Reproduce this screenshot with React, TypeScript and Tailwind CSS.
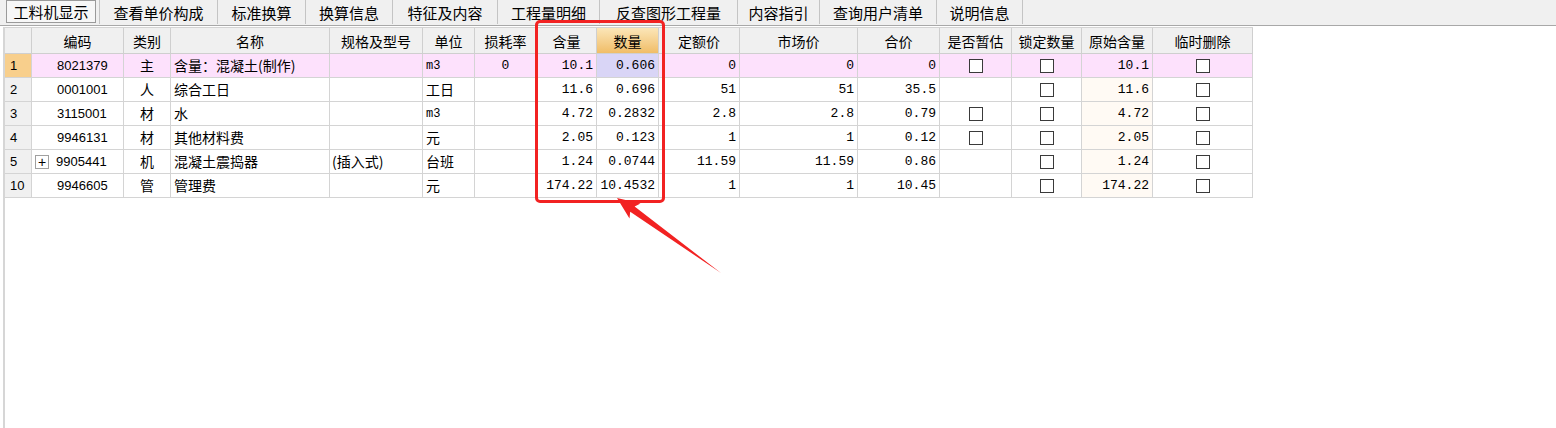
import React from "react";

const tabs: [string, number][] = [
  ["工料机显示", 96],
  ["查看单价构成", 118],
  ["标准换算", 88],
  ["换算信息", 87],
  ["特征及内容", 105],
  ["工程量明细", 102],
  ["反查图形工程量", 138],
  ["内容指引", 82],
  ["查询用户清单", 117],
  ["说明信息", 86],
];

const headers = [
  "",
  "编码",
  "类别",
  "名称",
  "规格及型号",
  "单位",
  "损耗率",
  "含量",
  "数量",
  "定额价",
  "市场价",
  "合价",
  "是否暂估",
  "锁定数量",
  "原始含量",
  "临时删除",
];

type Row = {
  no: string;
  code: string;
  kind: string;
  name: string;
  spec: string;
  unit: string;
  unitMono: boolean;
  loss: string;
  hl: string;
  sl: string;
  de: string;
  sc: string;
  hj: string;
  zg: boolean;
  ys: string;
  plus?: boolean;
};

const rows: Row[] = [
  { no: "1", code: "8021379", kind: "主", name: "含量：混凝土(制作)", spec: "", unit: "m3", unitMono: true, loss: "0", hl: "10.1", sl: "0.606", de: "0", sc: "0", hj: "0", zg: true, ys: "10.1" },
  { no: "2", code: "0001001", kind: "人", name: "综合工日", spec: "", unit: "工日", unitMono: false, loss: "", hl: "11.6", sl: "0.696", de: "51", sc: "51", hj: "35.5", zg: false, ys: "11.6" },
  { no: "3", code: "3115001", kind: "材", name: "水", spec: "", unit: "m3", unitMono: true, loss: "", hl: "4.72", sl: "0.2832", de: "2.8", sc: "2.8", hj: "0.79", zg: true, ys: "4.72" },
  { no: "4", code: "9946131", kind: "材", name: "其他材料费", spec: "", unit: "元", unitMono: false, loss: "", hl: "2.05", sl: "0.123", de: "1", sc: "1", hj: "0.12", zg: true, ys: "2.05" },
  { no: "5", code: "9905441", kind: "机", name: "混凝土震捣器", spec: "(插入式)", unit: "台班", unitMono: false, loss: "", hl: "1.24", sl: "0.0744", de: "11.59", sc: "11.59", hj: "0.86", zg: false, ys: "1.24", plus: true },
  { no: "10", code: "9946605", kind: "管", name: "管理费", spec: "", unit: "元", unitMono: false, loss: "", hl: "174.22", sl: "10.4532", de: "1", sc: "1", hj: "10.45", zg: false, ys: "174.22" },
];

const GRID =
  "grid grid-cols-[27px_92px_47px_159px_93px_52px_62px_60px_62px_81px_118px_82px_72px_70px_71px_100px]";

const cjk = { fontFamily: '"Noto Sans CJK SC", "Noto Sans", sans-serif' };
const mono = { fontFamily: '"Liberation Mono", "DejaVu Sans Mono", monospace' };
const sans = { fontFamily: '"Liberation Sans", Arial, sans-serif' };

function Check() {
  return <div className="w-[14px] h-[14px] border border-[#3a3a3a] bg-white" />;
}

const cell = "border-r border-b border-[#d4d4d4] flex items-center h-[24px] overflow-hidden whitespace-nowrap";

export default function App() {
  return (
    <div className="relative w-[1556px] h-[428px] overflow-hidden bg-white text-black" style={cjk}>
      {/* tab bar */}
      <div className="flex h-[26px] bg-[#f0f0f0] border-b border-[#a8a8a8] pl-[4px]">
        {tabs.map(([t, w], i) => (
          <div
            key={t}
            className="flex items-stretch border-r border-[#c4c4c4] h-[24px] shrink-0"
            style={{ width: w }}
          >
            {i === 0 ? (
              <div className="ml-[2px] w-[90px] h-[23px] border border-[#9a9a9a] bg-[#f7f7f7] flex items-center justify-center text-[15px] leading-none">
                {t}
              </div>
            ) : (
              <div className="w-full flex items-center justify-center text-[15px] leading-none">{t}</div>
            )}
          </div>
        ))}
      </div>

      {/* grid area */}
      <div className="ml-[3px] mt-[1px] border-l-2 border-[#d6d6d6] h-[401px]">
        <div className="w-[1248px]">
          {/* header */}
          <div className={GRID + " border-t border-[#d4d4d4]"}>
            {headers.map((h, i) => (
              <div
                key={i}
                className={
                  "h-[26px] border-r border-b border-[#cfcfcf] flex items-center justify-center text-[14px] leading-none " +
                  (i === 8
                    ? "bg-gradient-to-b from-[#fbe6b8] to-[#f0bd66]"
                    : "bg-[#f0f0f0]")
                }
              >
                {h}
              </div>
            ))}
          </div>
          {/* rows */}
          {rows.map((r, idx) => {
            const first = idx === 0;
            const rowBg = first ? "bg-[#fde1fc]" : "bg-white";
            return (
              <div key={r.no} className={GRID}>
                <div className={cell + " pl-[5px] text-[13px] " + (first ? "bg-[#f8cf8c]" : "bg-[#f0f0f0]")} style={sans}>
                  {r.no}
                </div>
                <div className={cell + " " + rowBg + " text-[13px]"} style={sans}>
                  {r.plus ? (
                    <div className="ml-[3px] mr-[7px] w-[14px] h-[14px] border border-[#a0a0a0] flex items-center justify-center text-[14px] leading-none bg-white">
                      +
                    </div>
                  ) : (
                    <div className="w-[25px] shrink-0" />
                  )}
                  {r.code}
                </div>
                <div className={cell + " " + rowBg + " justify-center text-[14px]"}>{r.kind}</div>
                <div className={cell + " " + rowBg + " pl-[3px] text-[14px]"}>{r.name}</div>
                <div className={cell + " " + rowBg + " pl-[2px] text-[14px]"}>{r.spec}</div>
                <div
                  className={cell + " " + rowBg + " pl-[3px] " + (r.unitMono ? "text-[12px]" : "text-[14px]")}
                  style={r.unitMono ? mono : undefined}
                >
                  {r.unit}
                </div>
                <div className={cell + " " + rowBg + " justify-center text-[13px]"} style={mono}>
                  {r.loss}
                </div>
                <div className={cell + " " + rowBg + " justify-end pr-[3px] text-[13px]"} style={mono}>
                  {r.hl}
                </div>
                <div
                  className={cell + " " + (first ? "bg-[#d9d5f6]" : "bg-white") + " justify-end pr-[3px] text-[13px]"}
                  style={mono}
                >
                  {r.sl}
                </div>
                <div className={cell + " " + rowBg + " justify-end pr-[3px] text-[13px]"} style={mono}>
                  {r.de}
                </div>
                <div className={cell + " " + rowBg + " justify-end pr-[3px] text-[13px]"} style={mono}>
                  {r.sc}
                </div>
                <div className={cell + " " + rowBg + " justify-end pr-[3px] text-[13px]"} style={mono}>
                  {r.hj}
                </div>
                <div className={cell + " " + rowBg + " justify-center"}>{r.zg ? <Check /> : null}</div>
                <div className={cell + " " + rowBg + " justify-center"}>
                  <Check />
                </div>
                <div
                  className={cell + " " + (first ? "bg-[#fde1fc]" : "bg-[#fffaf4]") + " justify-end pr-[3px] text-[13px]"}
                  style={mono}
                >
                  {r.ys}
                </div>
                <div className={cell + " " + rowBg + " justify-center"}>
                  <Check />
                </div>
              </div>
            );
          })}
        </div>
      </div>

      {/* annotation: red box */}
      <div className="absolute left-[535px] top-[20px] w-[130px] h-[183px] border-[3px] border-[#f22222] rounded-[5px] pointer-events-none" />

      {/* annotation: red arrow */}
      <svg className="absolute left-0 top-0 pointer-events-none" width="1556" height="428">
        <polygon
          points="617,198 640.5,203.5 634.6,206.6 721,273 630.2,211.8 629.5,218.5"
          fill="#f22222"
        />
      </svg>
    </div>
  );
}
